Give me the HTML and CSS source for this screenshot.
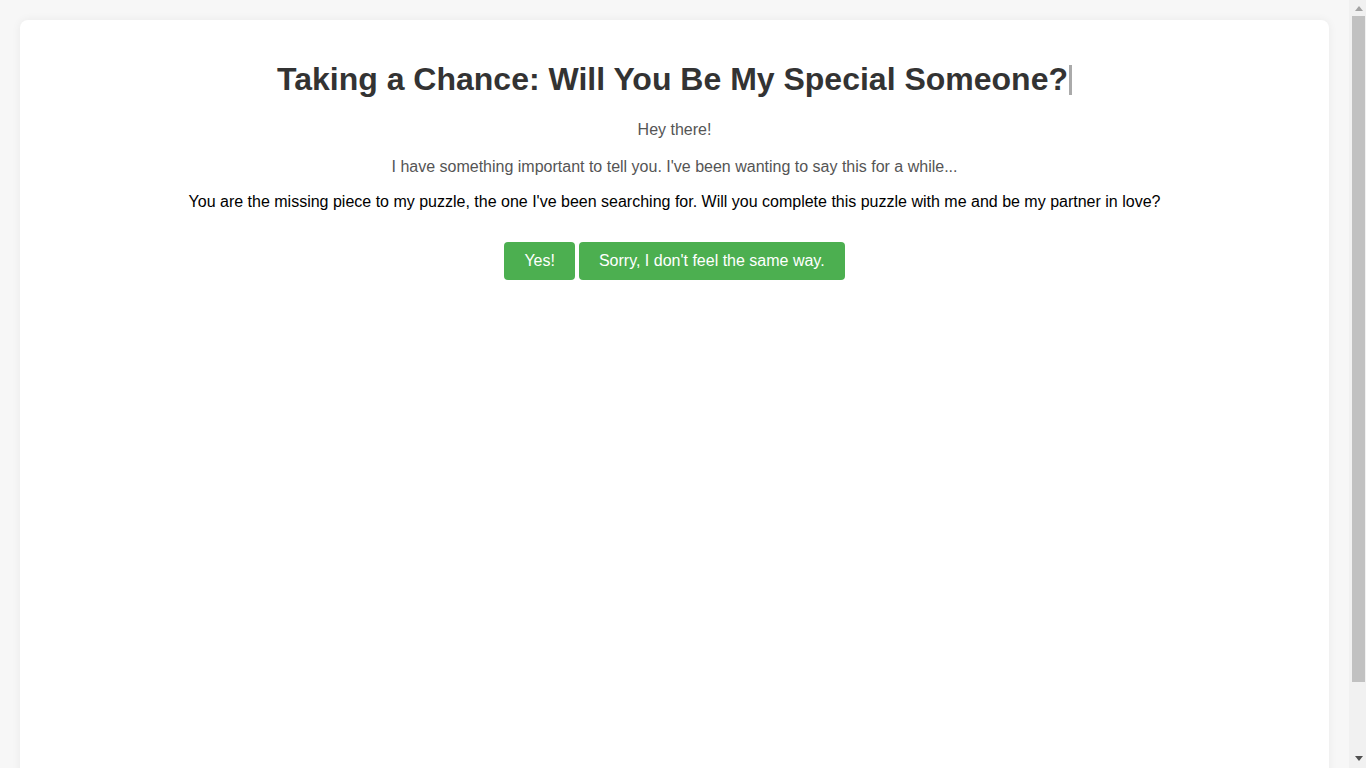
FILE: index.html
```html
<!DOCTYPE html>
<html lang="en">
<head>
<meta charset="utf-8">
<title>Taking a Chance</title>
<link rel="stylesheet" href="styles.css">
</head>
<body>
<main class="card">
  <h1 class="title">Taking a Chance: Will You Be My Special Someone?<span class="cursor"></span></h1>
  <p class="muted greet">Hey there!</p>
  <p class="muted intro">I have something important to tell you. I've been wanting to say this for a while...</p>
  <p class="message">You are the missing piece to my puzzle, the one I've been searching for. Will you complete this puzzle with me and be my partner in love?</p>
  <div class="actions">
    <button class="btn">Yes!</button>
    <button class="btn">Sorry, I don't feel the same way.</button>
  </div>
</main>
<div class="scrollbar" aria-hidden="true">
  <span class="arrow arrow-up"></span>
  <span class="thumb"></span>
  <span class="arrow arrow-down"></span>
</div>
</body>
</html>
```
FILE: styles.css
```css
html, body {
  margin: 0;
  padding: 0;
}
body {
  background: #f7f7f7;
  font-family: "Liberation Sans", Arial, sans-serif;
  padding: 20px 37px 20px 20px;
}
.card {
  background: #fff;
  border-radius: 8px;
  box-shadow: 0 0 10px rgba(0, 0, 0, 0.06);
  min-height: 807px;
  box-sizing: border-box;
  padding: 41px 20px 20px;
  text-align: center;
}
.title {
  font-size: 32px;
  color: #333;
  margin: 0 0 23px;
  line-height: 37px;
}
.cursor {
  display: inline-block;
  width: 0;
  height: 30px;
  border-right: 3px solid #aaa;
  vertical-align: -5px;
  margin-left: 1px;
}
.muted {
  color: #555;
  font-size: 16px;
}
.greet {
  margin: 0 0 19px;
}
.intro {
  margin: 0 0 17px;
}
.message {
  color: #000;
  font-size: 16px;
  margin: 0 0 31px;
}
.actions {
  display: flex;
  justify-content: center;
  gap: 4px;
}
.btn {
  background: #4caf50;
  color: #fff;
  border: none;
  border-radius: 4px;
  font-family: "Liberation Sans", Arial, sans-serif;
  font-size: 16px;
  padding: 10px 20px;
  line-height: 18px;
  cursor: pointer;
}
.scrollbar {
  position: fixed;
  top: 0;
  right: 0;
  width: 17px;
  height: 100vh;
  background: #f1f1f1;
  display: flex;
  flex-direction: column;
  align-items: center;
  box-sizing: border-box;
  padding: 6px 0 7px 2px;
}
.thumb {
  width: 13px;
  height: 666px;
  background: #c1c1c1;
  margin: 5px 0 auto;
}
.arrow {
  width: 0;
  height: 0;
  border-left: 4px solid transparent;
  border-right: 4px solid transparent;
}
.arrow-up {
  border-bottom: 5px solid #a3a3a3;
}
.arrow-down {
  border-top: 5px solid #505050;
}
```
